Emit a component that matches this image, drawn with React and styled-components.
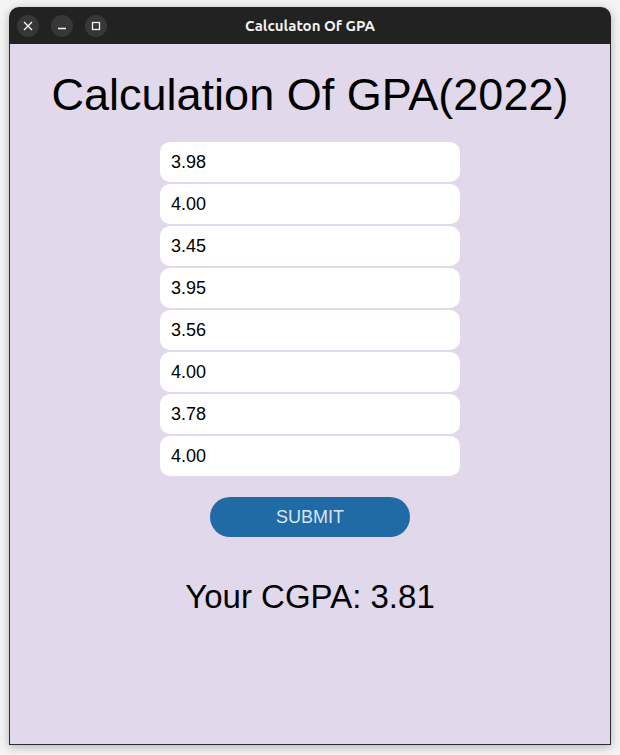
import React from "react";
import styled, { createGlobalStyle } from "styled-components";

const grades = ["3.98", "4.00", "3.45", "3.95", "3.56", "4.00", "3.78", "4.00"];
const cgpa = "3.81";

export default function App() {
  return (
    <>
      <GlobalStyle />
      <Desktop>
        <Window>
          <TitleBar>
            <Controls>
              <CtrlButton aria-label="close">
                <svg width="10" height="10" viewBox="0 0 10 10">
                  <path d="M1 1 L9 9 M9 1 L1 9" stroke="#f2f2f2" strokeWidth="1.4" />
                </svg>
              </CtrlButton>
              <CtrlButton aria-label="minimize">
                <svg width="10" height="10" viewBox="0 0 10 10">
                  <path d="M1 7.5 H9" stroke="#f2f2f2" strokeWidth="1.4" />
                </svg>
              </CtrlButton>
              <CtrlButton aria-label="maximize">
                <svg width="10" height="10" viewBox="0 0 10 10">
                  <rect x="1.5" y="1.5" width="7" height="7" fill="none" stroke="#f2f2f2" strokeWidth="1.3" />
                </svg>
              </CtrlButton>
            </Controls>
            <Title>Calculaton Of GPA</Title>
          </TitleBar>
          <Content>
            <Heading>Calculation Of GPA(2022)</Heading>
            <Form>
              {grades.map((g, i) => (
                <GradeInput key={i} defaultValue={g} />
              ))}
              <Submit type="button">SUBMIT</Submit>
            </Form>
            <Result>Your CGPA: {cgpa}</Result>
          </Content>
        </Window>
      </Desktop>
    </>
  );
}

const GlobalStyle = createGlobalStyle`
  html, body {
    margin: 0;
    padding: 0;
    background: #f4f4f4;
    font-family: "Liberation Sans", Arial, sans-serif;
  }
`;

const Desktop = styled.div`
  width: 620px;
  height: 755px;
  padding: 7px 9px 10px 9px;
  box-sizing: border-box;
`;

const Window = styled.div`
  width: 602px;
  height: 738px;
  display: flex;
  flex-direction: column;
  border-radius: 10px 10px 0 0;
  overflow: hidden;
  box-shadow: 0 2px 10px rgba(0, 0, 0, 0.28);
`;

const TitleBar = styled.div`
  position: relative;
  height: 37px;
  flex: none;
  background: #222222;
  display: flex;
  align-items: center;
  justify-content: center;
`;

const Controls = styled.div`
  position: absolute;
  left: 8px;
  top: 8px;
  display: flex;
  gap: 12px;
`;

const CtrlButton = styled.span`
  width: 22px;
  height: 22px;
  border-radius: 50%;
  background: #373737;
  display: flex;
  align-items: center;
  justify-content: center;
`;

const Title = styled.div`
  color: #f2f2f2;
  font-family: Ubuntu, "Noto Sans", sans-serif;
  font-weight: 700;
  font-size: 15px;
`;

const Content = styled.div`
  flex: 1;
  background: #e1d8eb;
  border: 1px solid #2c2a33;
  border-top: none;
  display: flex;
  flex-direction: column;
  align-items: center;
  padding-top: 24px;
`;

const Heading = styled.h1`
  margin: 0;
  font-size: 45px;
  font-weight: 400;
  line-height: 53px;
  color: #000;
`;

const Form = styled.div`
  margin-top: 21px;
  display: flex;
  flex-direction: column;
  align-items: center;
  gap: 2px;
`;

const GradeInput = styled.input`
  width: 300px;
  height: 40px;
  box-sizing: border-box;
  border: none;
  border-radius: 10px;
  background: #fff;
  padding: 0 11px;
  font-family: "Liberation Sans", Arial, sans-serif;
  font-size: 18px;
  color: #000;
  outline: none;
`;

const Submit = styled.button`
  margin-top: 19px;
  width: 200px;
  height: 40px;
  border: none;
  border-radius: 20px;
  background: #206aa6;
  color: #d9e6f2;
  font-family: "Liberation Sans", Arial, sans-serif;
  font-size: 18px;
`;

const Result = styled.div`
  margin-top: 41px;
  font-size: 33px;
  color: #000;
`;
